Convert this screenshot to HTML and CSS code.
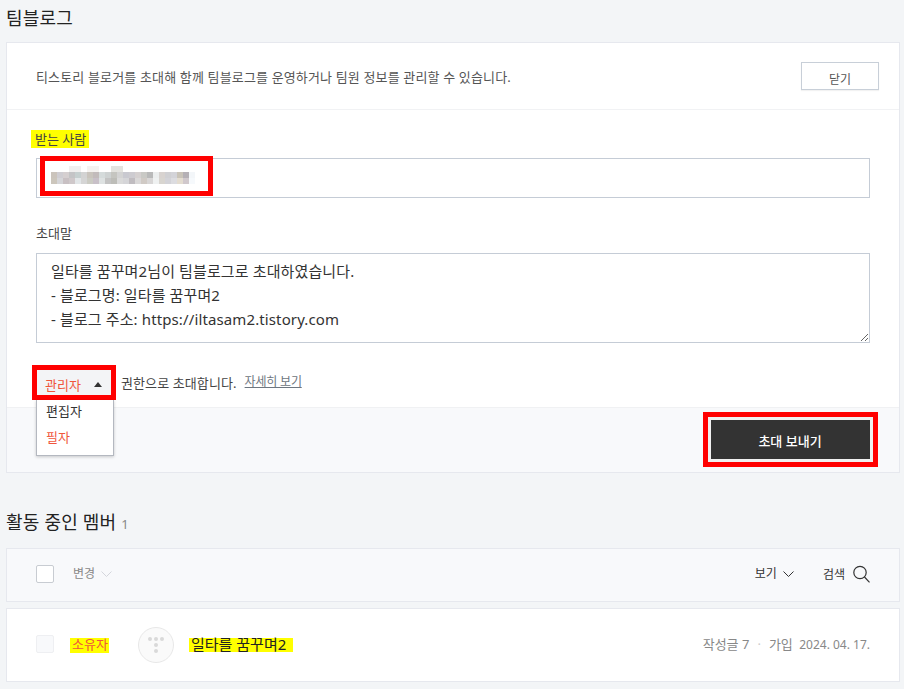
FILE: index.html
```html
<!DOCTYPE html>
<html lang="ko">
<head>
    <meta charset="UTF-8">
    <meta name="viewport" content="width=device-width, initial-scale=1.0">
    <title>팀블로그</title>
    <link rel="stylesheet" href="styles.css">
</head>
<body>

    <h2 class="page-title">팀블로그</h2>

    <section class="panel">
        <div class="panel-head">
            <p>티스토리 블로거를 초대해 함께 팀블로그를 운영하거나 팀원 정보를 관리할 수 있습니다.</p>
            <button class="close-button">닫기</button>
        </div>

        <div class="panel-body">
            <label class="field-label"><span class="marker">받는 사람</span></label>
            <div class="recipient">
                <div class="pixels"></div>
                <div class="red-box recipient-box"></div>
            </div>

            <label class="field-label message-label">초대말</label>
            <textarea class="message" spellcheck="false">일타를 꿈꾸며2님이 팀블로그로 초대하였습니다.
- 블로그명: 일타를 꿈꾸며2
- 블로그 주소: https://iltasam2.tistory.com</textarea>

            <div class="role-row">
                <div class="role-select">
                    <span class="role-current">관리자</span>
                    <span class="role-arrow"></span>
                    <div class="red-box role-box"></div>
                    <ul class="role-menu">
                        <li>편집자</li>
                        <li class="is-red">필자</li>
                    </ul>
                </div>
                <span class="role-text">권한으로 초대합니다.</span>
                <a class="role-link" href="#">자세히 보기</a>
            </div>
        </div>

        <div class="panel-foot">
            <button class="send-button">초대 보내기
                <span class="red-box send-box"></span>
            </button>
        </div>
    </section>

    <h3 class="member-title">활동 중인 멤버 <span class="member-count">1</span></h3>

    <div class="toolbar">
        <span class="check"></span>
        <span class="change">변경
            <svg width="11" height="6" viewBox="0 0 11 6"><path d="M.5.5l5 5 5-5" fill="none" stroke="#d4d6dc"/></svg>
        </span>
        <span class="view">보기
            <svg width="11" height="6" viewBox="0 0 11 6"><path d="M.5.5l5 5 5-5" fill="none" stroke="#333"/></svg>
        </span>
        <span class="search">검색
            <svg width="17" height="18" viewBox="0 0 17 18"><circle cx="7" cy="7.5" r="6.2" fill="none" stroke="#333" stroke-width="1.2"/><path d="M11.5 12l5 5.3" fill="none" stroke="#333" stroke-width="1.2"/></svg>
        </span>
    </div>

    <div class="member-row">
        <span class="check check-off"></span>
        <span class="marker owner">소유자</span>
        <span class="avatar">
            <svg width="18" height="18" viewBox="0 0 18 18" fill="#d9d9d9">
                <circle cx="3" cy="3" r="2"/><circle cx="9" cy="3" r="2"/><circle cx="15" cy="3" r="2"/>
                <circle cx="9" cy="9" r="2"/><circle cx="9" cy="15" r="2"/>
            </svg>
        </span>
        <span class="marker member-name">일타를 꿈꾸며2</span>
        <span class="member-info">작성글 7<i>·</i>가입 <span class="member-date">2024. 04. 17.</span></span>
    </div>

</body>
</html>
```

FILE: styles.css
```css
* {
    box-sizing: border-box;
}

body {
    font-family: "Noto Sans", "Noto Sans CJK KR", sans-serif;
    margin: 0;
    padding: 0 4px 7px 6px;
    background-color: #f3f5f7;
    color: #333;
    font-size: 13px;
}

button {
    font-family: inherit;
    cursor: pointer;
}

.page-title {
    margin: 0;
    height: 42px;
    font-size: 18px;
    font-weight: 400;
    line-height: 36px;
    letter-spacing: 0.2px;
    color: #222;
}

.panel {
    background-color: #fff;
    border: 1px solid #e6e8ee;
}

.panel-head {
    display: flex;
    justify-content: space-between;
    align-items: center;
    height: 67px;
    padding: 0 20px 0 29px;
    border-bottom: 1px solid #f1f2f4;
}

.panel-head p {
    margin: 0;
    color: #555;
    letter-spacing: 0.15px;
}

.close-button {
    width: 78px;
    height: 28px;
    padding: 5px 0 0;
    background-color: #fff;
    border: 1px solid #c8cfd8;
    box-shadow: 0 1px 1px rgba(0, 0, 0, 0.05);
    color: #555;
    font-size: 12px;
}

.panel-body {
    padding: 19px 29px 0;
    height: 297px;
}

.field-label {
    display: block;
    line-height: 20px;
    color: #444;
}

.message-label {
    margin-top: 25px;
}

.marker {
    background-color: #ffff00;
}

.field-label .marker {
    margin-left: -5px;
    padding: 0 3px 0 4px;
}

.recipient {
    position: relative;
    height: 40px;
    margin-top: 9px;
    border: 1px solid #c5ccd6;
}

.pixels {
    width: 144px;
    height: 18px;
    margin: 7px 0 0 14px;
    background-repeat: no-repeat;
    background-size: 144px 6px;
    background-position: 0 0, 0 6px, 0 12px;
    background-image:
        linear-gradient(90deg, #fff 0 18px, #f0efef 0 30px, #fff 0 36px, #f4f2f0 0 48px, #fff 0 60px, #e3e3df 0 72px, #fff 0),
        linear-gradient(90deg, #cbc4bc 0 6px, #cfcdd2 0 12px, #d5cfd0 0 18px, #c4c4c6 0 24px, #c6cfcf 0 30px, #d3d3d3 0 36px, #c9c4bd 0 42px, #c2bbbb 0 48px, #d5dbdb 0 54px, #ced2d2 0 60px, #c5c5c0 0 66px, #d3d3d3 0 72px, #c9c9d0 0 78px, #cdcbd0 0 84px, #d5d0d0 0 90px, #c9c9c5 0 96px, #b9b9b9 0 102px, #eceeee 0 108px, #d8d3d0 0 114px, #d0d0d3 0 120px, #d3d3d8 0 126px, #c9c3b8 0 132px, #b5b0b5 0 138px, #f3f6f9 0),
        linear-gradient(90deg, #ccc6bc 0 6px, #d5d5d8 0 12px, #c8c0c3 0 18px, #cfc8ca 0 24px, #e2e6e8 0 30px, #d5d5d5 0 36px, #cbcbc3 0 42px, #c8c0c8 0 48px, #dee2e2 0 54px, #c3c3c3 0 60px, #bdbdb8 0 66px, #dadada 0 72px, #d5d5d8 0 78px, #c0bcc0 0 84px, #dad8d8 0 90px, #d0cac5 0 96px, #d8d6d6 0 102px, #eff1f1 0 108px, #d8d5d0 0 114px, #d3d3d8 0 120px, #dcdce0 0 126px, #e3dcd0 0 132px, #d0c8cc 0 138px, #f6f9fc 0);
}

.red-box {
    position: absolute;
    border: 5px solid #ff0000;
    pointer-events: none;
}

.recipient-box {
    top: -3px;
    left: 3px;
    width: 173px;
    height: 40px;
}

.message {
    display: block;
    width: 100%;
    height: 90px;
    margin-top: 10px;
    padding: 5px 14px;
    border: 1px solid #c5ccd6;
    border-radius: 0;
    color: #333;
    font-family: inherit;
    font-size: 15px;
    line-height: 24px;
    letter-spacing: 0.12px;
    outline: none;
}

.role-row {
    display: flex;
    align-items: center;
    height: 25px;
    margin-top: 27px;
}

.role-select {
    position: relative;
    display: flex;
    align-items: center;
    justify-content: space-between;
    width: 78px;
    height: 30px;
    margin-top: 5px;
    padding: 2px 12px 3px 9px;
    background-color: #f3f4f6;
}

.role-current {
    color: #f0563c;
}

.role-arrow {
    border-left: 4px solid transparent;
    border-right: 4px solid transparent;
    border-bottom: 5px solid #333;
}

.role-box {
    top: -5px;
    left: -4px;
    width: 84px;
    height: 35px;
}

.role-menu {
    list-style-type: none;
    position: absolute;
    top: 30px;
    left: 0;
    width: 78px;
    height: 56px;
    margin: 0;
    padding: 0 0 0 9px;
    background-color: #fff;
    border: 1px solid #b4b8c0;
    border-top: none;
    box-shadow: 0 1px 3px rgba(0, 0, 0, 0.2);
    line-height: 26px;
    z-index: 2;
}

.role-menu li {
    color: #333;
}

.role-menu li:first-child {
    margin-top: -2px;
}

.role-menu .is-red {
    color: #f0563c;
}

.role-text {
    margin: 0 0 1px 7px;
    color: #444;
    letter-spacing: 0.1px;
}

.role-link {
    margin-left: 8px;
    margin-bottom: 3px;
    color: #6d7680;
    font-size: 12px;
    letter-spacing: -0.2px;
}

.panel-foot {
    display: flex;
    justify-content: flex-end;
    height: 65px;
    padding: 12px 29px 0 0;
    background-color: #f8f9fb;
    border-top: 1px solid #f0f1f3;
}

.send-button {
    position: relative;
    width: 160px;
    height: 40px;
    background-color: #333;
    border: none;
    color: #fff;
    font-size: 13px;
    font-weight: 500;
}

.send-box {
    top: -8px;
    left: -7px;
    right: -8px;
    bottom: -7px;
    box-shadow: inset 0 0 0 3px #f0f0f0;
}

.member-title {
    margin: 0;
    height: 75px;
    padding-top: 34px;
    font-size: 18px;
    font-weight: 400;
    line-height: 30px;
    letter-spacing: 0.2px;
    color: #222;
}

.member-count {
    font-size: 13px;
    color: #888;
}

.toolbar,
.member-row {
    display: flex;
    align-items: center;
    border: 1px solid #e6e8ee;
    padding: 0 29px;
}

.toolbar {
    height: 54px;
    background-color: #f8f9fb;
    font-size: 12px;
}

.check {
    width: 18px;
    height: 18px;
    margin-bottom: 2px;
    background-color: #fff;
    border: 1px solid #c8ccd2;
    border-radius: 2px;
}

.check-off {
    background-color: #f8f9fb;
    border-color: #eeeff2;
}

.change {
    margin: 0 0 4px 19px;
    color: #888;
}

.change svg {
    margin: 0 0 1px 3px;
}

.view {
    margin: 0 0 4px auto;
}

.view svg {
    margin: 0 0 1px 3px;
}

.search {
    display: flex;
    align-items: center;
    gap: 8px;
    margin: 0 0 2px 29px;
}

.member-row {
    height: 74px;
    margin-top: 6px;
    background-color: #fff;
}

.owner {
    margin-left: 16px;
    width: 39px;
    height: 15px;
    padding-left: 2px;
    color: #f0563c;
    font-size: 13px;
    line-height: 13px;
}

.avatar {
    display: flex;
    align-items: center;
    justify-content: center;
    width: 36px;
    height: 36px;
    margin-left: 29px;
    background-color: #fafafa;
    border: 1px solid #e8e8e8;
    border-radius: 50%;
}

.member-name {
    margin-left: 15px;
    height: 14px;
    padding: 0 7px 0 2px;
    color: #222;
    font-size: 15px;
    line-height: 12px;
}

.member-info {
    margin: 0 0 3px auto;
    color: #888;
    font-size: 13px;
}

.member-info i {
    margin: 0 8px;
    font-style: normal;
    color: #ccc;
}

.member-date {
    margin-left: 3px;
    font-size: 12px;
}
```
